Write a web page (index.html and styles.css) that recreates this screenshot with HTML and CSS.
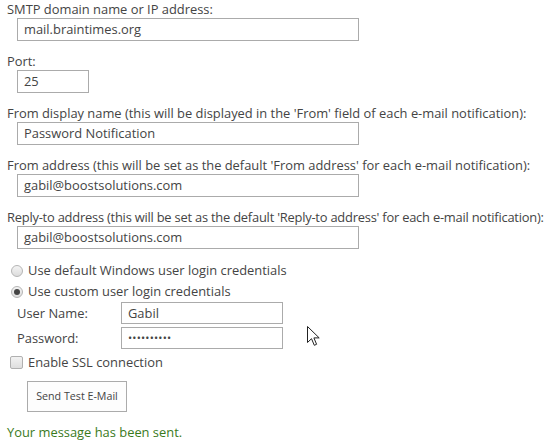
FILE: index.html
```html
<!DOCTYPE html>
<html>
<head>
<meta charset="utf-8">
<link rel="stylesheet" href="styles.css">
</head>
<body>
<div class="page">
  <div class="field">
    <div class="label">SMTP domain name or IP address:</div>
    <div class="input wide">mail.braintimes.org</div>
  </div>
  <div class="field">
    <div class="label">Port:</div>
    <div class="input port">25</div>
  </div>
  <div class="field">
    <div class="label">From display name (this will be displayed in the 'From' field of each e-mail notification):</div>
    <div class="input wide">Password Notification</div>
  </div>
  <div class="field">
    <div class="label">From address (this will be set as the default 'From address' for each e-mail notification):</div>
    <div class="input wide">gabil@boostsolutions.com</div>
  </div>
  <div class="field">
    <div class="label tight">Reply-to address (this will be set as the default 'Reply-to address' for each e-mail notification):</div>
    <div class="input wide">gabil@boostsolutions.com</div>
  </div>
  <div class="options">
    <div class="option"><span class="radio"></span>Use default Windows user login credentials</div>
    <div class="option"><span class="radio checked"></span>Use custom user login credentials</div>
    <div class="cred">
      <div class="cred-row"><span class="cred-label">User Name:</span><div class="input small">Gabil</div></div>
      <div class="cred-row"><span class="cred-label">Password:</span><div class="input small dots">••••••••••</div></div>
    </div>
    <div class="option ssl"><span class="check"></span>Enable SSL connection</div>
  </div>
  <div class="button">Send Test E-Mail</div>
  <div class="message">Your message has been sent.</div>
  <svg class="cursor" width="13" height="21" viewBox="0 0 13 21">
    <path d="M0.5 0.5 L0.5 16.5 L4.5 12.7 L7.3 19.3 L9.6 18.3 L6.9 11.9 L12.2 11.9 Z" fill="#fff" stroke="#222" stroke-width="1" stroke-linejoin="miter"/>
  </svg>
</div>
</body>
</html>
```

FILE: styles.css
```css
html, body {
  margin: 0;
  padding: 0;
  background: #fff;
}
.page {
  position: relative;
  width: 548px;
  height: 445px;
  padding: 0 7px;
  box-sizing: border-box;
  font-family: "Open Sans", "Liberation Sans", sans-serif;
  font-size: 12.9px;
  color: #444;
  overflow: hidden;
}
.field {
  margin-bottom: 11px;
}
.label {
  height: 18px;
  line-height: 18px;
  white-space: nowrap;
}
.label.tight {
  letter-spacing: -0.22px;
}
.input {
  box-sizing: border-box;
  height: 23px;
  line-height: 21px;
  border: 1px solid #ababab;
  padding: 0 6px;
  margin-left: 10px;
  background: #fff;
  color: #444;
}
.wide { width: 342px; }
.port { width: 72px; }
.option {
  display: flex;
  align-items: center;
  height: 21px;
  line-height: 21px;
}
.radio {
  box-sizing: border-box;
  width: 12px;
  height: 12px;
  border-radius: 50%;
  border: 1px solid #b5b5b5;
  background: linear-gradient(#f4f4f4, #dcdcdc);
  margin: 0 5px 0 4px;
  position: relative;
}
.radio.checked::after {
  content: "";
  position: absolute;
  left: 2px;
  top: 2px;
  width: 6px;
  height: 6px;
  border-radius: 50%;
  background: #444;
}
.cred {
  padding-left: 10px;
}
.cred-row {
  display: flex;
  align-items: center;
  height: 22px;
  margin-bottom: 3px;
}
.cred-label {
  width: 104px;
}
.input.small {
  width: 162px;
  height: 22px;
  line-height: 20px;
  margin-left: 0;
}
.dots {
  font-size: 11px;
  letter-spacing: 0.2px;
}
.check {
  box-sizing: border-box;
  width: 13px;
  height: 13px;
  border-radius: 2px;
  border: 1px solid #b0b0b0;
  background: linear-gradient(#f2f2f2, #dedede);
  margin: 0 5px 0 3px;
}
.button {
  box-sizing: border-box;
  margin: 8px 0 0 20px;
  width: 100px;
  height: 31px;
  line-height: 29px;
  border: 1px solid #ababab;
  text-align: center;
  font-size: 10.7px;
  background: #fdfdfd;
  white-space: nowrap;
}
.message {
  margin-top: 11px;
  color: #3a7a1c;
  height: 18px;
  line-height: 18px;
}
.cursor {
  position: absolute;
  left: 307px;
  top: 326px;
}
```
